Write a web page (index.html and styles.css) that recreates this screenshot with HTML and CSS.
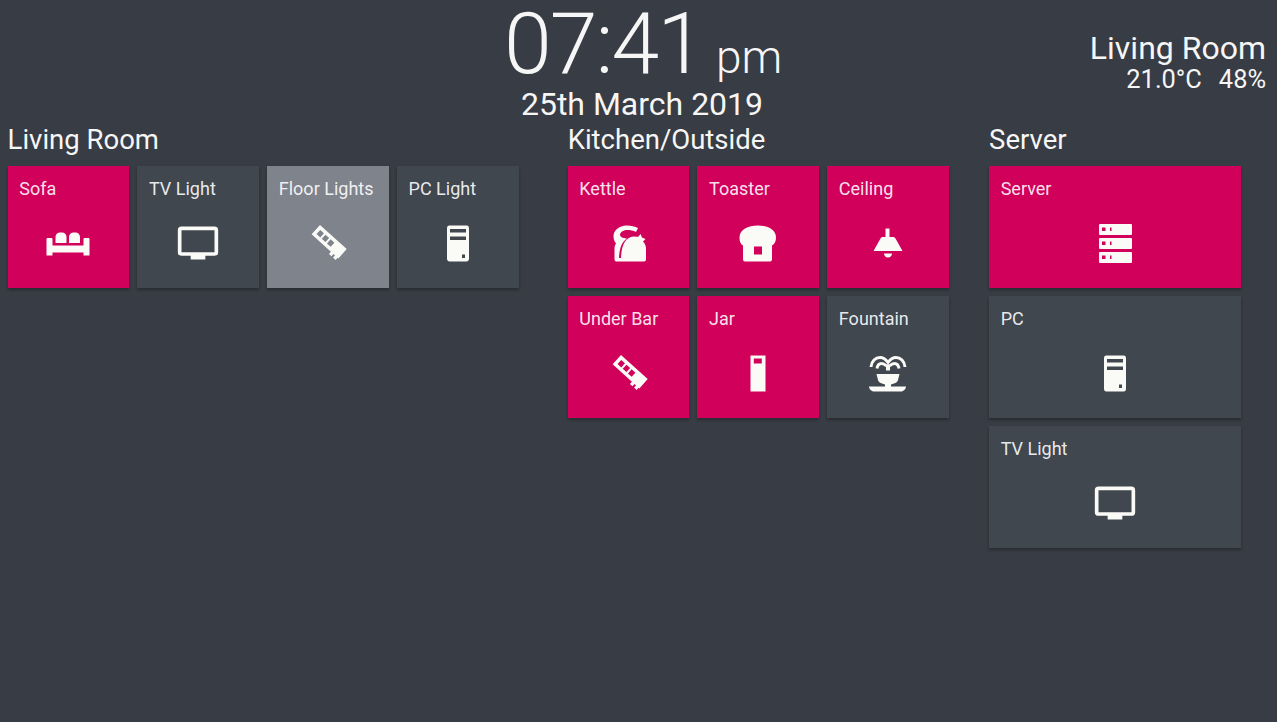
FILE: index.html
```html
<!DOCTYPE html>
<html lang="en">
<head>
    <meta charset="UTF-8">
    <meta name="viewport" content="width=device-width, initial-scale=1.0">
    <title>Home Panel</title>
    <link rel="stylesheet" href="styles.css">
</head>
<body>
    <header class="top">
        <div class="clock">
            <div class="time">07:41<span class="ampm">pm</span></div>
            <div class="date">25th March 2019</div>
        </div>
        <div class="climate">
            <div class="climate-name">Living Room</div>
            <div class="climate-values"><span>21.0°C</span><span>48%</span></div>
        </div>
    </header>

    <main class="groups">
        <section class="group group-living">
            <h2>Living Room</h2>
            <div class="tiles">
                <div class="tile on">
                    <div class="label">Sofa</div>
                    <svg class="icon" viewBox="0 0 44 44"><path d="M9.500 16a4.500 4.500 0 0 1 4.500-4.500h2a4.500 4.500 0 0 1 4.500 4.500v6H9.500zM23 16a4.500 4.500 0 0 1 4.500-4.500h2a4.500 4.500 0 0 1 4.500 4.500v6H23zM.500 18a1 1 0 0 1 1-1h4a1 1 0 0 1 1 1v6.500h31V18a1 1 0 0 1 1-1h4a1 1 0 0 1 1 1v16.500h-6v-3H6.500v3h-6z"/></svg>
                </div>
                <div class="tile">
                    <div class="label">TV Light</div>
                    <svg class="icon" viewBox="0 0 24 24"><path d="M21,17H3V5H21M21,3H3A2,2 0 0,0 1,5V17A2,2 0 0,0 3,19H8V21H16V19H21A2,2 0 0,0 23,17V5A2,2 0 0,0 21,3Z"/></svg>
                </div>
                <div class="tile dimmed">
                    <div class="label">Floor Lights</div>
                    <svg class="icon" viewBox="0 0 44 44"><g transform="rotate(42 22 22)"><path fill-rule="evenodd" d="M4 14h36v12.500h-1v3h-3.500v-3h-2v3H30v-3H4zM7.500 17.500v5.500h5v-5.500zM14.500 17.500v5.500h5v-5.500zM21.500 17.500v5.500h5v-5.500z"/></g></svg>
                </div>
                <div class="tile">
                    <div class="label">PC Light</div>
                    <svg class="icon" viewBox="0 0 44 44"><path fill-rule="evenodd" d="M13 4.500h18a2.500 2.500 0 0 1 2 2.500v31a2.500 2.500 0 0 1-2 2.500H13a2.500 2.500 0 0 1-2-2.500V7a2.500 2.500 0 0 1 2-2.500zM14 8v3.500h16V8zM14 15.500v3.500h16v-3.500zM26 33.500v3.500h3v-3.500z"/></svg>
                </div>
            </div>
        </section>

        <section class="group group-kitchen">
            <h2>Kitchen/Outside</h2>
            <div class="tiles">
                <div class="tile on">
                    <div class="label">Kettle</div>
                    <svg class="icon" viewBox="0 0 44 44"><path d="M9 40.500H37a2 2 0 0 0 2-2V28c0-3-1-5.500-3-7.500l2.500-2.500-3.500-1.500-1.500-3.500-2.500 3c-1-.3-3-.5-4.500-.5-8 1-12 8-12.500 21.500h-2c.5-10 3-16.500 8-19.500-2 0-7-1-7-3.500 0-2.500 3-5 7-5 3 0 6.500.5 9 2l2-4c-3-1.500-7-2.500-11-2.500C11.500 5 6.500 9.500 6.500 15.500c0 2.500 1 5 2.500 7-1 1.500-1.500 3-1.500 5V38.500a2 2 0 0 0 1.500 2z"/></svg>
                </div>
                <div class="tile on">
                    <div class="label">Toaster</div>
                    <svg class="icon" viewBox="0 0 44 44"><path fill-rule="evenodd" d="M22 4.500c10 0 18 4 18 12 0 4-1.500 6.500-4 8v14a2 2 0 0 1-2 2H9a2 2 0 0 1-2-2v-14c-2.500-1.500-3.500-4-3.500-8 0-8 8.500-12 18.500-12zM18 25.500v8h8v-8z"/></svg>
                </div>
                <div class="tile on">
                    <div class="label">Ceiling</div>
                    <svg class="icon" viewBox="0 0 44 44"><path d="M19.500 7.500h4v8.500h3.500c1 0 2 .5 2.500 1.500l7 12.500H7.500l7-12.500c.5-1 1.500-1.500 2.500-1.500h2.500zM18 32.500h8c0 2-1.500 4-4 4s-4-2-4-4z"/></svg>
                </div>
                <div class="tile on">
                    <div class="label">Under Bar</div>
                    <svg class="icon" viewBox="0 0 44 44"><g transform="rotate(42 22 22)"><path fill-rule="evenodd" d="M4 14h36v12.500h-1v3h-3.500v-3h-2v3H30v-3H4zM7.500 17.500v5.500h5v-5.500zM14.500 17.500v5.500h5v-5.500zM21.500 17.500v5.500h5v-5.500z"/></g></svg>
                </div>
                <div class="tile on">
                    <div class="label">Jar</div>
                    <svg class="icon" viewBox="0 0 44 44"><path fill-rule="evenodd" d="M14.500 4.500h15v36h-15zM17.800 7.500v5h8v-5z"/></svg>
                </div>
                <div class="tile">
                    <div class="label">Fountain</div>
                    <svg class="icon" viewBox="0 0 44 44"><path d="M10.500 23h23l-1.500 6c-.5 2-2 3-4 3.500l-3 1V35.500h15c0 2.500-2.500 5-5 5H8c-2.500 0-5-2.500-5-5h16v-2l-3-1c-2-.5-3.500-1.500-4-3.500z"/><path d="M20 13.500h4v6h-4z"/><path class="spray" d="M5 16C5.500 10 9.500 6.500 14 6.500c3.500 0 6 2 8 5 2-3 4.500-5 8-5 4.500 0 8.500 3.500 9 9.500M11 17.500c.5-3 2-5 4.500-5 2 0 3.500 1 5 2.500M33 17.500c-.5-3-2-5-4.500-5-2 0-3.500 1-5 2.500"/></svg>
                </div>
            </div>
        </section>

        <section class="group group-server">
            <h2>Server</h2>
            <div class="tiles tiles-wide">
                <div class="tile on">
                    <div class="label">Server</div>
                    <svg class="icon" viewBox="0 0 44 44"><path fill-rule="evenodd" d="M7 3h31a1 1 0 0 1 1 1v9a1 1 0 0 1-1 1H7a1 1 0 0 1-1-1V4a1 1 0 0 1 1-1zM9 6.500v3.500h3.500V6.500zM17 6.500v3.500h1.500V6.500zM7 17h31a1 1 0 0 1 1 1v9a1 1 0 0 1-1 1H7a1 1 0 0 1-1-1v-9a1 1 0 0 1 1-1zM9 20.500v3.500h3.500v-3.500zM17 20.500v3.500h1.500v-3.500zM7 31h31a1 1 0 0 1 1 1v9a1 1 0 0 1-1 1H7a1 1 0 0 1-1-1v-9a1 1 0 0 1 1-1zM9 34.500v3.500h3.500v-3.500zM17 34.500v3.500h1.500v-3.500z"/></svg>
                </div>
                <div class="tile">
                    <div class="label">PC</div>
                    <svg class="icon" viewBox="0 0 44 44"><path fill-rule="evenodd" d="M13 4.500h18a2.500 2.500 0 0 1 2 2.500v31a2.500 2.500 0 0 1-2 2.500H13a2.500 2.500 0 0 1-2-2.500V7a2.500 2.500 0 0 1 2-2.500zM14 8v3.500h16V8zM14 15.500v3.500h16v-3.500zM26 33.500v3.500h3v-3.500z"/></svg>
                </div>
                <div class="tile">
                    <div class="label">TV Light</div>
                    <svg class="icon" viewBox="0 0 24 24"><path d="M21,17H3V5H21M21,3H3A2,2 0 0,0 1,5V17A2,2 0 0,0 3,19H8V21H16V19H21A2,2 0 0,0 23,17V5A2,2 0 0,0 21,3Z"/></svg>
                </div>
            </div>
        </section>
    </main>
</body>
</html>
```

FILE: styles.css
```css
html, body {
    margin: 0;
    height: 100%;
}
body {
    background-color: #383c44;
    color: #f6f6f6;
    font-family: Roboto, "Liberation Sans", sans-serif;
    overflow: hidden;
}
.top {
    display: flex;
    justify-content: space-between;
    height: 124px;
    padding: 0 11px 0 504px;
}
.clock {
    width: 278px;
    text-align: center;
}
.time {
    height: 86px;
    font-size: 86px;
    font-weight: 300;
    letter-spacing: -2px;
    line-height: 88px;
    white-space: nowrap;
}
.ampm {
    font-size: 46px;
    letter-spacing: 0;
    margin-left: 13px;
}
.date {
    font-size: 32px;
    line-height: 36px;
    margin-left: -2px;
}
.climate {
    text-align: right;
    padding-top: 30px;
}
.climate-name {
    font-size: 32px;
    line-height: 36px;
}
.climate-values {
    display: flex;
    justify-content: flex-end;
    gap: 17px;
    font-size: 25.4px;
    line-height: 26px;
}
.groups {
    display: flex;
    padding-left: 7.6px;
}
h2 {
    font-size: 27.5px;
    font-weight: 400;
    line-height: 32px;
    margin: 0 0 10px;
}
.group-living {
    width: 511.2px;
    margin-right: 48.9px;
}
.group-kitchen {
    width: 381.4px;
    margin-right: 40px;
}
.group-server {
    width: 252px;
}
.tiles {
    display: flex;
    flex-wrap: wrap;
    gap: 8px;
}
.tile {
    width: 121.8px;
    height: 122px;
    box-sizing: border-box;
    padding-top: 12px;
    display: flex;
    flex-direction: column;
    align-items: center;
    background-color: #40474f;
    box-shadow: 0 2px 3px rgba(0, 0, 0, 0.3);
}
.tiles-wide .tile {
    width: 100%;
}
.tile.on {
    background-color: #d1005b;
}
.tile.dimmed {
    background-color: #7f838c;
}
.label {
    align-self: flex-start;
    padding-left: 11.6px;
    color: rgba(255, 255, 255, 0.9);
    font-size: 18px;
    line-height: 22px;
}
.icon {
    width: 44px;
    height: 44px;
    margin-top: 20.5px;
    fill: #fafaf6;
}
.spray {
    fill: none;
    stroke: #fafaf6;
    stroke-width: 3;
}
```
